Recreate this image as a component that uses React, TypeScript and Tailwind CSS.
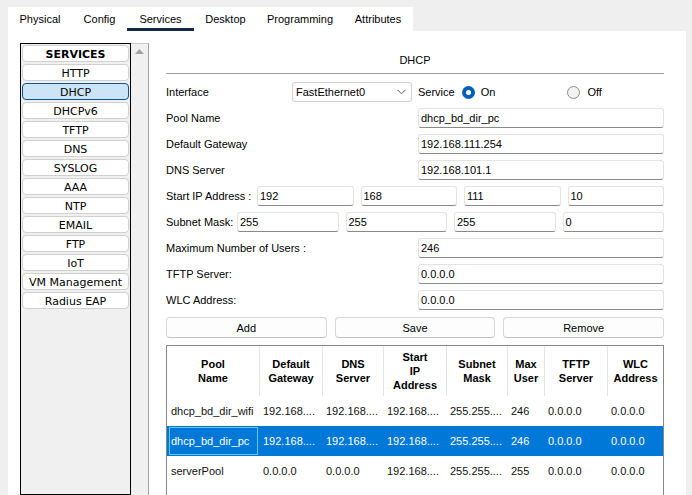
import React from "react";

function Field({ value, className }: { value: string; className?: string }) {
  return (
    <div
      className={`h-[20px] bg-white border border-[#e3e3e3] border-b-[#8a8a8a] rounded-[3px] flex items-center pl-[2px] text-[11px] text-black whitespace-nowrap overflow-hidden ${className ?? ""}`}
    >
      {value}
    </div>
  );
}

const tabs = [
  { label: "Physical", cls: "w-[64px] border-transparent" },
  { label: "Config", cls: "w-[55px] border-transparent" },
  { label: "Services", cls: "w-[67px] border-[#122a48]" },
  { label: "Desktop", cls: "w-[63px] border-transparent" },
  { label: "Programming", cls: "w-[86px] border-transparent" },
  { label: "Attributes", cls: "w-[70px] border-transparent" },
];

const services = [
  "HTTP",
  "DHCP",
  "DHCPv6",
  "TFTP",
  "DNS",
  "SYSLOG",
  "AAA",
  "NTP",
  "EMAIL",
  "FTP",
  "IoT",
  "VM Management",
  "Radius EAP",
];

const headers = [
  ["Pool", "Name"],
  ["Default", "Gateway"],
  ["DNS", "Server"],
  ["Start", "IP", "Address"],
  ["Subnet", "Mask"],
  ["Max", "User"],
  ["TFTP", "Server"],
  ["WLC", "Address"],
];

const rows = [
  ["dhcp_bd_dir_wifi", "192.168....", "192.168....", "192.168....", "255.255....", "246", "0.0.0.0", "0.0.0.0"],
  ["dhcp_bd_dir_pc", "192.168....", "192.168....", "192.168....", "255.255....", "246", "0.0.0.0", "0.0.0.0"],
  ["serverPool", "0.0.0.0", "0.0.0.0", "192.168....", "255.255....", "255", "0.0.0.0", "0.0.0.0"],
];

const gridCols = "grid grid-cols-[92px_63px_61px_63px_61px_37px_63px_56px]";

export default function App() {
  return (
    <div className="w-[692px] h-[495px] bg-[#efefef] overflow-hidden flex flex-col pt-[7px] pl-[8px] pr-[6px] font-['Liberation_Sans',Arial,sans-serif] text-black">
      {/* Tabs */}
      <div className="flex h-[24px] w-[405px] bg-white">
        {tabs.map((t) => (
          <div
            key={t.label}
            className={`h-[24px] flex items-center justify-center text-[11px] border-b-[3px] pt-[3px] ${t.cls}`}
          >
            {t.label}
          </div>
        ))}
      </div>

      {/* Content */}
      <div className="flex-1 min-h-0 bg-white flex pt-[12px] pl-[12px] overflow-hidden">
        {/* Sidebar */}
        <div className="flex h-full">
          <div className="w-[111px] h-full border border-black bg-[#f0f0f0] flex flex-col gap-[2px] px-[1px] pt-[1px] font-['DejaVu_Sans',Verdana,sans-serif] text-[11px]">
            <div className="h-[17px] bg-white border border-[#d0d0d0] rounded-[4px] flex items-center justify-center pt-[3px] font-bold">
              SERVICES
            </div>
            {services.map((s) => (
              <div
                key={s}
                className={
                  s === "DHCP"
                    ? "h-[17px] bg-[#cce4f7] border border-[#0b5394] rounded-[4px] flex items-center justify-center pt-[3px]"
                    : "h-[17px] bg-white border border-[#d0d0d0] rounded-[4px] flex items-center justify-center pt-[3px]"
                }
              >
                {s}
              </div>
            ))}
          </div>
          <div className="w-[18px] h-full bg-[#f0f0f0] border-t border-r border-t-[#c8c8c8] border-r-[#a0a0a0] flex justify-center pt-[5px]">
            <svg width="9" height="6" viewBox="0 0 9 6">
              <polygon points="4.5,0 9,5 0,5" fill="#a3a3a3" />
            </svg>
          </div>
        </div>

        {/* Main */}
        <div className="flex-1 h-full flex flex-col pl-[17px] pr-[22px] text-[11px]">
          <div className="h-[31px] flex items-center justify-center pt-[4px] border-b border-[#a0a0a0]">
            DHCP
          </div>

          <div className="mt-[8px] flex flex-col gap-[6px]">
            {/* Interface row */}
            <div className="h-[20px] flex items-center">
              <div className="w-[126px]">Interface</div>
              <div className="w-[120px] h-[20px] bg-white border border-[#d4d4d4] rounded-[3px] flex items-center justify-between pl-[3px] pr-[5px]">
                <span>FastEthernet0</span>
                <svg width="9" height="6" viewBox="0 0 9 6">
                  <polyline points="0.5,0.8 4.5,4.8 8.5,0.8" fill="none" stroke="#606060" strokeWidth="1" />
                </svg>
              </div>
              <div className="ml-[6px]">Service</div>
              <div className="ml-[7px] w-[13px] h-[13px] rounded-full bg-[#005fb8] flex items-center justify-center">
                <div className="w-[5px] h-[5px] rounded-full bg-white" />
              </div>
              <div className="ml-[6px]">On</div>
              <div className="ml-[72px] w-[13px] h-[13px] rounded-full border border-[#8a8a8a] bg-[#f3f3f3]" />
              <div className="ml-[7px]">Off</div>
            </div>

            <div className="h-[20px] flex items-center">
              <div className="w-[252px]">Pool Name</div>
              <Field value="dhcp_bd_dir_pc" className="flex-1" />
            </div>
            <div className="h-[20px] flex items-center">
              <div className="w-[252px]">Default Gateway</div>
              <Field value="192.168.111.254" className="flex-1" />
            </div>
            <div className="h-[20px] flex items-center">
              <div className="w-[252px]">DNS Server</div>
              <Field value="192.168.101.1" className="flex-1" />
            </div>

            <div className="h-[20px] flex items-center">
              <div className="w-[91px] whitespace-nowrap">Start IP Address :</div>
              <div className="flex-1 grid grid-cols-4 gap-[7px]">
                <Field value="192" />
                <Field value="168" />
                <Field value="111" />
                <Field value="10" />
              </div>
            </div>
            <div className="h-[20px] flex items-center">
              <div className="w-[71px] whitespace-nowrap">Subnet Mask:</div>
              <div className="flex-1 grid grid-cols-4 gap-[7px]">
                <Field value="255" />
                <Field value="255" />
                <Field value="255" />
                <Field value="0" />
              </div>
            </div>

            <div className="h-[20px] flex items-center">
              <div className="w-[252px]">Maximum Number of Users :</div>
              <Field value="246" className="flex-1" />
            </div>
            <div className="h-[20px] flex items-center">
              <div className="w-[252px]">TFTP Server:</div>
              <Field value="0.0.0.0" className="flex-1" />
            </div>
            <div className="h-[20px] flex items-center">
              <div className="w-[252px]">WLC Address:</div>
              <Field value="0.0.0.0" className="flex-1" />
            </div>
          </div>

          {/* Buttons */}
          <div className="mt-[7px] grid grid-cols-3 gap-[8px]">
            {["Add", "Save", "Remove"].map((b) => (
              <div
                key={b}
                className="h-[21px] bg-[#fdfdfd] border border-[#d6d6d6] border-b-[#c2c2c2] rounded-[4px] flex items-center justify-center pt-[1px]"
              >
                {b}
              </div>
            ))}
          </div>

          {/* Table */}
          <div className="mt-[7px] flex-1 border-t border-x border-[#828790] bg-white">
            <div className={`${gridCols} h-[50px]`}>
              {headers.map((h, i) => (
                <div
                  key={i}
                  className={`flex flex-col items-center justify-center font-bold text-[11px] leading-[14px] ${i > 0 ? "border-l border-[#e5e5e5]" : ""}`}
                >
                  {h.map((l) => (
                    <span key={l}>{l}</span>
                  ))}
                </div>
              ))}
            </div>
            {rows.map((r, ri) => (
              <div
                key={ri}
                className={`${gridCols} h-[30px] ${ri === 1 ? "bg-[#0078d7] text-white" : "text-[#111]"}`}
              >
                {r.map((c, ci) => (
                  <div key={ci} className="relative flex items-center pl-[4px] whitespace-nowrap overflow-hidden">
                    {ri === 1 && ci === 0 && (
                      <div className="absolute left-[2px] right-[1px] top-[1px] bottom-[1px] border border-[#66c6ff]" />
                    )}
                    {c}
                  </div>
                ))}
              </div>
            ))}
          </div>
        </div>
      </div>
    </div>
  );
}
